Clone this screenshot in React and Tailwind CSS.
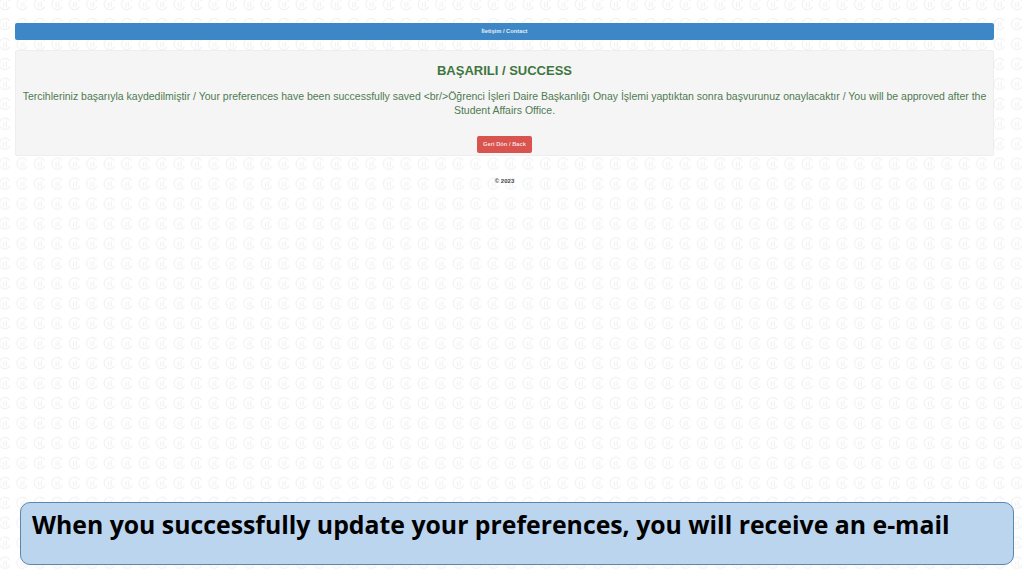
function BackgroundPattern() {
  return (
    <svg className="absolute inset-0 w-full h-full" xmlns="http://www.w3.org/2000/svg">
      <defs>
        <pattern id="logo" x="-3.6" y="-6" width="17.45" height="19.95" patternUnits="userSpaceOnUse">
          <g fill="none" stroke="#eeeff1" strokeWidth="1">
            <path d="M13.2 7A5.6 5.6 0 1 0 13.6 12.5" />
            <path d="M7.4 13.5V8.6M10 13.5V7.4" />
          </g>
        </pattern>
      </defs>
      <rect width="100%" height="100%" fill="url(#logo)" />
    </svg>
  );
}

function App() {
  return (
    <div className="relative w-[1024px] h-[576px] overflow-hidden bg-white font-['Liberation_Sans',Arial,sans-serif]">
      <BackgroundPattern />
      <div className="relative h-full flex flex-col pt-[23px] pl-[15px] pr-[10px]">
        <div className="mr-[20px]">
          <div className="h-[17px] flex items-center justify-center bg-[#3d87c6] rounded-[2px] text-[5.75px] font-bold text-[#e4eef8]">
            İletişim / Contact
          </div>

          <div className="mt-[10px] h-[106px] flex flex-col items-center bg-[#f5f5f5] border border-[#eeeeee] rounded-[2px]">
            <h2 className="mt-[12px] text-[13px] leading-[16px] font-bold text-[#3f763f]">BAŞARILI / SUCCESS</h2>
            <p className="mt-[11px] text-[10.5px] leading-[13.5px] text-center text-[#4f7a52]">
              Tercihleriniz başarıyla kaydedilmiştir / Your preferences have been successfully saved &lt;br/&gt;Öğrenci İşleri Daire Başkanlığı Onay İşlemi yaptıktan sonra başvurunuz onaylacaktır / You will be approved after the Student Affairs Office.
            </p>
            <button className="mt-[19px] h-[17px] w-[55px] bg-[#d9534f] rounded-[2px] text-[5.75px] font-bold text-[#f6dedd]">
              Geri Dön / Back
            </button>
          </div>

          <div className="mt-[21px] text-center text-[6px] leading-[8px] font-bold text-[#444444]">© 2023</div>
        </div>

        <div className="mt-auto mb-[11px] ml-[5px] h-[63px] pl-[11px] pt-[5px] bg-[#bcd5ee] border border-[#5d86ad] rounded-[10px]">
          <span className="font-['Open_Sans',sans-serif] font-bold text-[24.8px] leading-[32px] text-black">
            When you successfully update your preferences, you will receive an e-mail
          </span>
        </div>
      </div>
    </div>
  );
}

export default App;
